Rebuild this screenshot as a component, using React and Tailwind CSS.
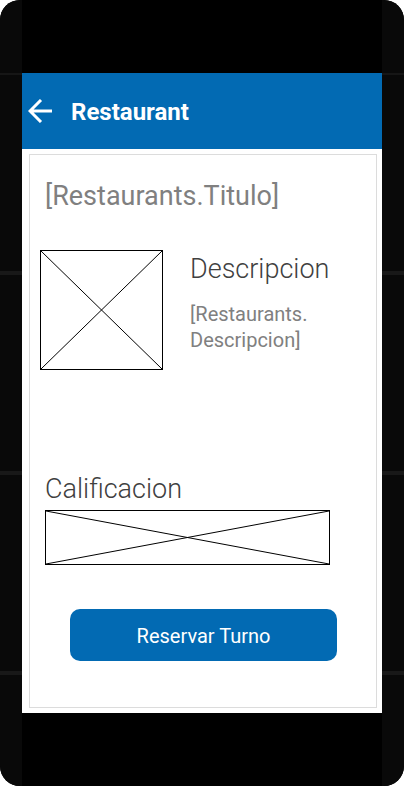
import React from "react";

function Rail() {
  return (
    <div className="flex w-[22px] shrink-0 flex-col bg-[#090909]" aria-hidden="true">
      <div className="h-[73px]" />
      <div className="h-0.5 bg-[#161616]" />
      <div className="h-[196px]" />
      <div className="h-1 bg-[#181818]" />
      <div className="h-[196px]" />
      <div className="h-1 bg-[#181818]" />
      <div className="h-[196px]" />
      <div className="h-1 bg-[#181818]" />
    </div>
  );
}

function Placeholder({ label, className }) {
  return (
    <div role="img" aria-label={label} className={"border border-black " + className}>
      <svg className="block h-full w-full" viewBox="0 0 100 100" preserveAspectRatio="none">
        <path
          d="M0 0L100 100M100 0L0 100"
          stroke="black"
          strokeWidth="1"
          fill="none"
          vectorEffect="non-scaling-stroke"
        />
      </svg>
    </div>
  );
}

export default function App() {
  return (
    <div className="bg-white font-[Roboto,sans-serif]">
      <div className="flex overflow-hidden rounded-[20px] bg-black">
        <Rail />
        <div className="min-w-0 flex-1 py-[73px]">
          <header className="flex h-[76px] items-center gap-[17px] bg-[#026ab3] px-1 text-white">
            <button type="button" aria-label="Back" className="flex h-8 w-7 items-center justify-center">
              <svg className="h-6 w-6" viewBox="0 0 24 24" fill="none" stroke="currentColor" strokeWidth="3">
                <path d="M24 12H2M13 1L2 12L13 23" />
              </svg>
            </button>
            <h1 className="pt-0.5 text-2xl font-bold">Restaurant</h1>
          </header>
          <main className="bg-white pt-[5px] pr-[5px] pb-[5px] pl-[7px]">
            <div className="border border-[#dcdcdc] pt-6 pb-[46px]">
              <h2 className="px-[15px] text-[27px] leading-[34px] text-[#808080]">[Restaurants.Titulo]</h2>
              <section className="mt-[37px] flex items-start gap-[27px] pr-4 pl-[10px]">
                <Placeholder label="Restaurant" className="h-[120px] w-[123px] shrink-0" />
                <div className="min-w-0 pt-0.5">
                  <h3 className="text-[27px] leading-[34px] font-light text-[#404040]">Descripcion</h3>
                  <p className="mt-[15px] text-xl leading-[26px] text-[#808080]">
                    [Restaurants.
                    <br />
                    Descripcion]
                  </p>
                </div>
              </section>
              <section className="mt-[102px] pr-[46px] pl-[15px]">
                <h3 className="text-[27px] leading-[34px] font-light text-[#404040]">Calificacion</h3>
                <Placeholder label="Calificacion" className="mt-1 h-[55px]" />
              </section>
              <div className="mt-11 pr-[39px] pl-10">
                <button
                  type="button"
                  className="h-[52px] w-full rounded-[10px] bg-[#026ab3] pt-0.5 text-xl text-white"
                >
                  Reservar Turno
                </button>
              </div>
            </div>
          </main>
        </div>
        <Rail />
      </div>
    </div>
  );
}
